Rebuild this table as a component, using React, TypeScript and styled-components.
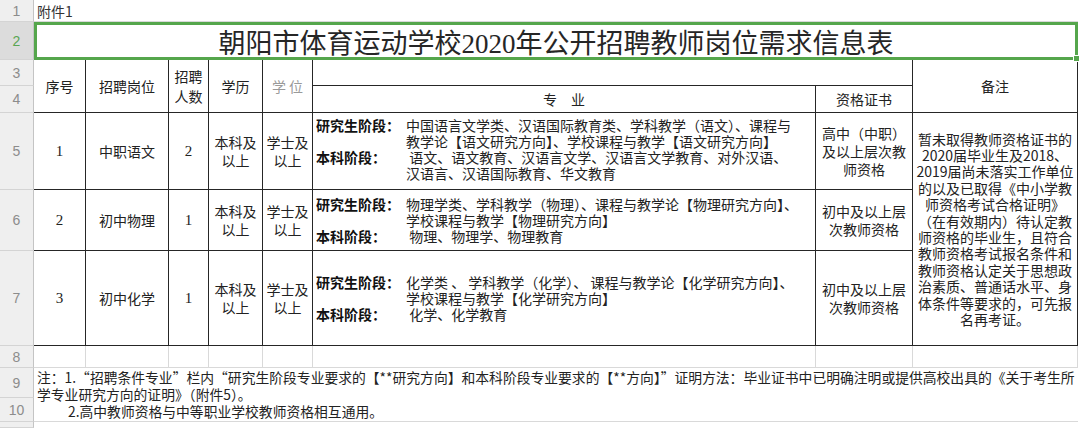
import React from 'react';
import styled, { createGlobalStyle } from 'styled-components';

const CJK = `"Noto Sans CJK SC", "Noto Sans", sans-serif`;
const SERIF_NUM = `"Liberation Serif", "Noto Sans CJK SC", serif`;
const LINE = '#262626';
const GRID = '#d9d9d9';

const GlobalStyle = createGlobalStyle`
  html, body { margin: 0; padding: 0; background: #fff; }
  body {
    width: 1080px;
    height: 428px;
    overflow: hidden;
    font-family: ${CJK};
    color: #1e1e1e;
  }
`;

const Sheet = styled.div`
  display: grid;
  grid-template-columns: 34px 52px 83px 40px 54px 50px 503px 97px 165px;
  grid-template-rows: 22px 38px 26px 27px 77px 61px 95px 22px 30px 24px 6px;
  width: 1078px;
  background: #fff;
`;

const RowHead = styled.div<{ $row: number; $active?: boolean }>`
  grid-column: 1;
  grid-row: ${p => p.$row};
  display: flex;
  align-items: center;
  justify-content: center;
  box-sizing: border-box;
  background: ${p => (p.$active ? '#dcdcdc' : '#efefef')};
  color: ${p => (p.$active ? '#5aa653' : '#8c8c8c')};
  border-bottom: 1px solid #d4d4d4;
  border-right: 1px solid #c4c4c4;
  font: 14px "Liberation Sans", sans-serif;
`;

const Cell = styled.div<{ $col: string; $row: string }>`
  grid-column: ${p => p.$col};
  grid-row: ${p => p.$row};
  box-sizing: border-box;
  min-width: 0;
  min-height: 0;
`;

const AttachCell = styled(Cell)`
  display: flex;
  align-items: center;
  padding-left: 3px;
  font-size: 14px;
  color: #333;
  border-bottom: 1px solid ${GRID};
`;

const TitleCell = styled(Cell)`
  position: relative;
  display: flex;
  align-items: center;
  justify-content: center;
  border: 3px solid #55a64c;
  font-family: ${SERIF_NUM};
  font-size: 27px;
  color: #262626;
  white-space: nowrap;
  &::after {
    content: '';
    position: absolute;
    right: -5px;
    bottom: -5px;
    width: 5px;
    height: 5px;
    background: #55a64c;
    border: 1px solid #fff;
  }
`;

const TableCell = styled(Cell)`
  border-right: 1px solid ${LINE};
  border-bottom: 1px solid ${LINE};
`;

const HeadCell = styled(TableCell)<{ $muted?: boolean; $tall?: boolean }>`
  display: flex;
  align-items: center;
  justify-content: center;
  text-align: center;
  white-space: pre-line;
  font-size: 14px;
  line-height: ${p => (p.$tall ? '20px' : '18px')};
  color: ${p => (p.$muted ? '#9a9a9a' : '#222')};
  letter-spacing: ${p => (p.$muted ? '3px' : '0')};
  padding-left: ${p => (p.$muted ? '3px' : '0')};
`;

const DataCell = styled(TableCell)<{ $num?: boolean }>`
  display: flex;
  align-items: center;
  justify-content: center;
  text-align: center;
  white-space: pre-line;
  font-family: ${p => (p.$num ? SERIF_NUM : CJK)};
  font-size: ${p => (p.$num ? '15px' : '14px')};
  line-height: 18px;
  color: #222;
`;

const MajorCell = styled(TableCell)<{ $lift?: boolean }>`
  display: flex;
  flex-direction: column;
  justify-content: center;
  padding: 0 0 ${p => (p.$lift ? '4px' : '0')} 3px;
  font-size: 14px;
  line-height: 16px;
  color: #222;
  white-space: pre;
  overflow: hidden;
`;

const Stage = styled.div`
  display: flex;
`;

const StageLabel = styled.span`
  flex: 0 0 90px;
  font-weight: 700;
  color: #111;
`;

const StageText = styled.div`
  display: flex;
  flex-direction: column;
`;

const RemarkCell = styled(TableCell)`
  display: flex;
  align-items: center;
  justify-content: center;
  text-align: center;
  white-space: pre-line;
  font-size: 14px;
  line-height: 16.4px;
  color: #222;
`;

const BlankCell = styled(Cell)`
  border-right: 1px solid ${GRID};
  border-bottom: 1px solid ${GRID};
`;

const NotesCell = styled(Cell)`
  display: flex;
  flex-direction: column;
  padding: 1px 0 0 3px;
  font-size: 13.8px;
  line-height: 17px;
  color: #222;
  white-space: nowrap;
  border-bottom: 1px solid ${GRID};
`;

const NoteLine = styled.div<{ $indent?: boolean }>`
  padding-left: ${p => (p.$indent ? '31px' : '0')};
`;

type Row = {
  row: number;
  no: string;
  post: string;
  count: string;
  edu: string;
  degree: string;
  grad: string[];
  under: string[];
  cert: string;
};

const rows: Row[] = [
  {
    row: 5,
    no: '1',
    post: '中职语文',
    count: '2',
    edu: '本科及\n以上',
    degree: '学士及\n以上',
    grad: [
      '中国语言文学类、汉语国际教育类、学科教学（语文）、课程与',
      '教学论【语文研究方向】、学校课程与教学【语文研究方向】',
    ],
    under: [' 语文、语文教育、汉语言文学、汉语言文学教育、对外汉语、', '汉语言、汉语国际教育、华文教育'],
    cert: '高中（中职）\n及以上层次教\n师资格',
  },
  {
    row: 6,
    no: '2',
    post: '初中物理',
    count: '1',
    edu: '本科及\n以上',
    degree: '学士及\n以上',
    grad: ['物理学类、学科教学（物理）、课程与教学论【物理研究方向】、', '学校课程与教学【物理研究方向】'],
    under: [' 物理、物理学、物理教育'],
    cert: '初中及以上层\n次教师资格',
  },
  {
    row: 7,
    no: '3',
    post: '初中化学',
    count: '1',
    edu: '本科及\n以上',
    degree: '学士及\n以上',
    grad: ['化学类 、 学科教学（化学）、 课程与教学论【化学研究方向】、', '学校课程与教学【化学研究方向】'],
    under: [' 化学、化学教育'],
    cert: '初中及以上层\n次教师资格',
  },
];

const remark = [
  '暂未取得教师资格证书的',
  '2020届毕业生及2018、',
  '2019届尚未落实工作单位',
  '的以及已取得《中小学教',
  '师资格考试合格证明》',
  '（在有效期内）待认定教',
  '师资格的毕业生，且符合',
  '教师资格考试报名条件和',
  '教师资格认定关于思想政',
  '治素质、普通话水平、身',
  '体条件等要求的，可先报',
  '名再考证。',
].join('\n');

const blankCols = ['2', '3', '4', '5', '6', '7', '8', '9'];

export default function App() {
  return (
    <>
      <GlobalStyle />
      <Sheet>
        {[1, 2, 3, 4, 5, 6, 7, 8, 9, 10, 11].map(n => (
          <RowHead key={n} $row={n} $active={n === 2}>
            {n === 11 ? '' : n}
          </RowHead>
        ))}

        <AttachCell $col="2 / 10" $row="1">附件1</AttachCell>
        <TitleCell $col="2 / 10" $row="2">朝阳市体育运动学校2020年公开招聘教师岗位需求信息表</TitleCell>

        <HeadCell $col="2" $row="3 / 5">序号</HeadCell>
        <HeadCell $col="3" $row="3 / 5">招聘岗位</HeadCell>
        <HeadCell $col="4" $row="3 / 5" $tall>{'招聘\n人数'}</HeadCell>
        <HeadCell $col="5" $row="3 / 5">学历</HeadCell>
        <HeadCell $col="6" $row="3 / 5" $muted>学位</HeadCell>
        <HeadCell $col="7 / 9" $row="3" />
        <HeadCell $col="7" $row="4">专　业</HeadCell>
        <HeadCell $col="8" $row="4">资格证书</HeadCell>
        <HeadCell $col="9" $row="3 / 5">备注</HeadCell>

        {rows.map(r => (
          <React.Fragment key={r.no}>
            <DataCell $col="2" $row={String(r.row)} $num>{r.no}</DataCell>
            <DataCell $col="3" $row={String(r.row)}>{r.post}</DataCell>
            <DataCell $col="4" $row={String(r.row)} $num>{r.count}</DataCell>
            <DataCell $col="5" $row={String(r.row)}>{r.edu}</DataCell>
            <DataCell $col="6" $row={String(r.row)}>{r.degree}</DataCell>
            <MajorCell $col="7" $row={String(r.row)} $lift={r.row === 5}>
              <Stage>
                <StageLabel>研究生阶段：</StageLabel>
                <StageText>
                  {r.grad.map(l => (
                    <span key={l}>{l}</span>
                  ))}
                </StageText>
              </Stage>
              <Stage>
                <StageLabel>本科阶段：</StageLabel>
                <StageText>
                  {r.under.map(l => (
                    <span key={l}>{l}</span>
                  ))}
                </StageText>
              </Stage>
            </MajorCell>
            <DataCell $col="8" $row={String(r.row)}>{r.cert}</DataCell>
          </React.Fragment>
        ))}

        <RemarkCell $col="9" $row="5 / 8">{remark}</RemarkCell>

        {blankCols.map(c => (
          <BlankCell key={c} $col={c} $row="8" />
        ))}

        <NotesCell $col="2 / 10" $row="9 / 11">
          <NoteLine>
            注：1.“招聘条件专业”栏内“研究生阶段专业要求的【**研究方向】和本科阶段专业要求的【**方向】”证明方法：毕业证书中已明确注明或提供高校出具的《关于考生所
          </NoteLine>
          <NoteLine>学专业研究方向的证明》（附件5）。</NoteLine>
          <NoteLine $indent>2.高中教师资格与中等职业学校教师资格相互通用。</NoteLine>
        </NotesCell>
      </Sheet>
    </>
  );
}
